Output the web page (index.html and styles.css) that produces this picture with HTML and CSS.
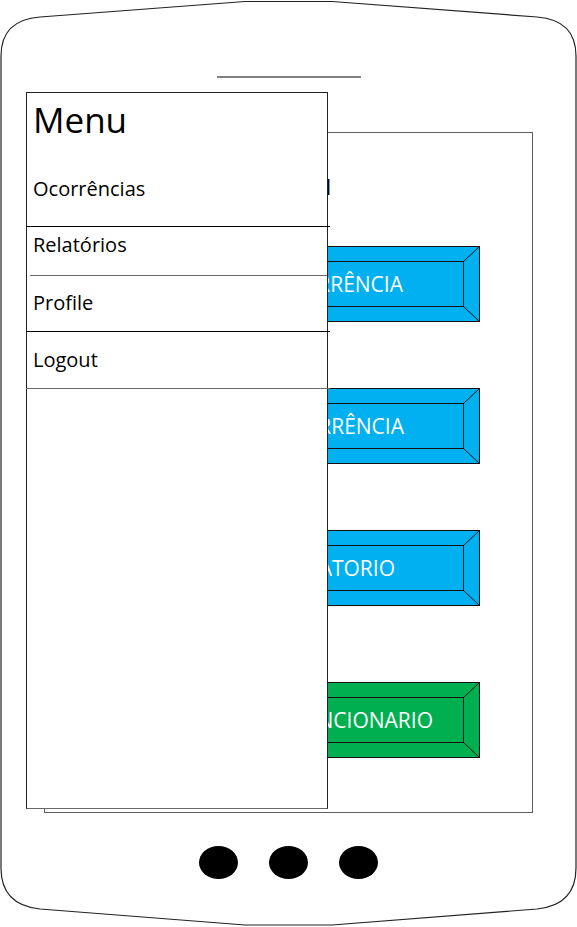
FILE: index.html
```html
<!DOCTYPE html>
<html lang="pt">
<head>
<meta charset="utf-8">
<title>Menu</title>
<link rel="stylesheet" href="styles.css">
</head>
<body>
<div class="phone">
  <svg class="phone-outline" width="577" height="927" viewBox="0 0 577 927">
    <path d="M40 17 L245 1.5 L332 1.5 L537 17 Q576 20 576 56 L576 868 Q576 905 537 909 L332 925 L245 925 L40 909 Q1 905 1 868 L1 56 Q1 20 40 17 Z"/>
  </svg>
  <div class="speaker"></div>
  <div class="screen">
    <h1 class="screen-title">Menu</h1>
    <div class="btn btn--blue btn--first btn--pr77">
      <svg class="bevel" viewBox="0 0 380 76"><rect class="face" x="0.5" y="0.5" width="379" height="75"/><rect class="inner" x="16.5" y="15.5" width="347" height="45"/><path class="edge" d="M363.5 15.5 L379.5 0.5 M363.5 60.5 L379.5 75.5 M16.5 15.5 L0.5 0.5 M16.5 60.5 L0.5 75.5"/></svg>
      <span class="btn-label">NOVA OCORRÊNCIA</span>
    </div>
    <div class="btn btn--blue btn--gap66 btn--pr76">
      <svg class="bevel" viewBox="0 0 380 76"><rect class="face" x="0.5" y="0.5" width="379" height="75"/><rect class="inner" x="16.5" y="15.5" width="347" height="45"/><path class="edge" d="M363.5 15.5 L379.5 0.5 M363.5 60.5 L379.5 75.5 M16.5 15.5 L0.5 0.5 M16.5 60.5 L0.5 75.5"/></svg>
      <span class="btn-label">LISTAR OCORRÊNCIA</span>
    </div>
    <div class="btn btn--blue btn--gap66 btn--pr85">
      <svg class="bevel" viewBox="0 0 380 76"><rect class="face" x="0.5" y="0.5" width="379" height="75"/><rect class="inner" x="16.5" y="15.5" width="347" height="45"/><path class="edge" d="M363.5 15.5 L379.5 0.5 M363.5 60.5 L379.5 75.5 M16.5 15.5 L0.5 0.5 M16.5 60.5 L0.5 75.5"/></svg>
      <span class="btn-label">GERAR RELATORIO</span>
    </div>
    <div class="btn btn--green btn--gap76 btn--pr47">
      <svg class="bevel" viewBox="0 0 380 76"><rect class="face" x="0.5" y="0.5" width="379" height="75"/><rect class="inner" x="16.5" y="15.5" width="347" height="45"/><path class="edge" d="M363.5 15.5 L379.5 0.5 M363.5 60.5 L379.5 75.5 M16.5 15.5 L0.5 0.5 M16.5 60.5 L0.5 75.5"/></svg>
      <span class="btn-label">CADASTRAR FUNCIONARIO</span>
    </div>
  </div>
  <div class="home-keys">
    <span class="key"></span>
    <span class="key"></span>
    <span class="key"></span>
  </div>

  <nav class="drawer">
    <div class="drawer-title">Menu</div>
    <div class="drawer-item drawer-item--first">Ocorrências</div>
    <div class="sep sep--dark"></div>
    <div class="drawer-item drawer-item--second">Relatórios</div>
    <div class="sep sep--grey sep--inset"></div>
    <div class="drawer-item drawer-item--third">Profile</div>
    <div class="sep sep--dark"></div>
    <div class="drawer-item drawer-item--fourth">Logout</div>
    <div class="sep sep--grey"></div>
  </nav>
</div>
</body>
</html>
```

FILE: styles.css
```css
* { box-sizing: border-box; }

html, body {
  margin: 0;
  padding: 0;
  background: #fff;
}

body {
  font-family: "Open Sans", "Noto Sans", sans-serif;
  color: #000;
}

.phone {
  position: relative;
  width: 577px;
  height: 927px;
  display: flex;
  flex-direction: column;
  align-items: center;
  overflow: hidden;
}

.phone-outline {
  position: absolute;
  left: 0;
  top: 0;
}

.phone-outline path {
  fill: none;
  stroke: #222;
  stroke-width: 1.2;
}

.speaker {
  margin-top: 76px;
  width: 144px;
  height: 2px;
  background: #808080;
}

.screen {
  margin-top: 54px;
  width: 489px;
  height: 681px;
  border: 1px solid #5f5f5f;
  display: flex;
  flex-direction: column;
}

.screen-title {
  margin: 31px 0 0 0;
  width: 287px;
  text-align: right;
  font-size: 30px;
  font-weight: 400;
  line-height: 40px;
}

.btn {
  position: relative;
  margin-left: 55px;
  width: 380px;
  height: 76px;
  flex: none;
  display: flex;
  align-items: center;
  justify-content: flex-end;
  color: #fff;
  font-size: 21px;
  line-height: 75px;
  white-space: nowrap;
}

.btn--first { margin-top: 42px; }
.btn--gap66 { margin-top: 66px; }
.btn--gap76 { margin-top: 76px; }

.btn--pr77 { padding-right: 77px; }
.btn--pr76 { padding-right: 76px; }
.btn--pr85 { padding-right: 85px; }
.btn--pr47 { padding-right: 47px; }

.bevel {
  position: absolute;
  left: 0;
  top: 0;
  width: 380px;
  height: 76px;
}

.bevel .face { stroke: #111; stroke-width: 1; }
.btn--blue .bevel .face { fill: #00b0f0; }
.btn--green .bevel .face { fill: #00b050; }
.bevel .inner { fill: none; stroke: #111; stroke-width: 1; }
.bevel .edge { fill: none; stroke: #111; stroke-width: 1; }

.btn-label {
  position: relative;
}

.home-keys {
  margin-top: 33px;
  display: flex;
  gap: 31px;
}

.key {
  width: 39px;
  height: 33px;
  border-radius: 50%;
  background: #000;
}

.drawer {
  position: absolute;
  left: 26px;
  top: 92px;
  width: 302px;
  height: 717px;
  background: #fff;
  border: 1px solid #222;
  border-bottom-color: #666;
  display: flex;
  flex-direction: column;
}

.drawer-title {
  padding: 3px 0 0 6px;
  font-size: 35px;
  line-height: 48px;
}

.drawer-item {
  padding-left: 6px;
  font-size: 20px;
  line-height: 27px;
}

.drawer-item--first { padding-top: 31px; padding-bottom: 24px; }
.drawer-item--second { padding-top: 4px; padding-bottom: 17px; }
.drawer-item--third { padding-top: 13px; padding-bottom: 15px; }
.drawer-item--fourth { padding-top: 14px; padding-bottom: 15px; }

.sep {
  height: 1px;
  margin-left: -1px;
  margin-right: -3px;
}

.sep--dark { background: #000; }
.sep--grey { background: #6a6a6a; }
.sep--inset { margin-left: 3px; margin-right: 0; }
```
